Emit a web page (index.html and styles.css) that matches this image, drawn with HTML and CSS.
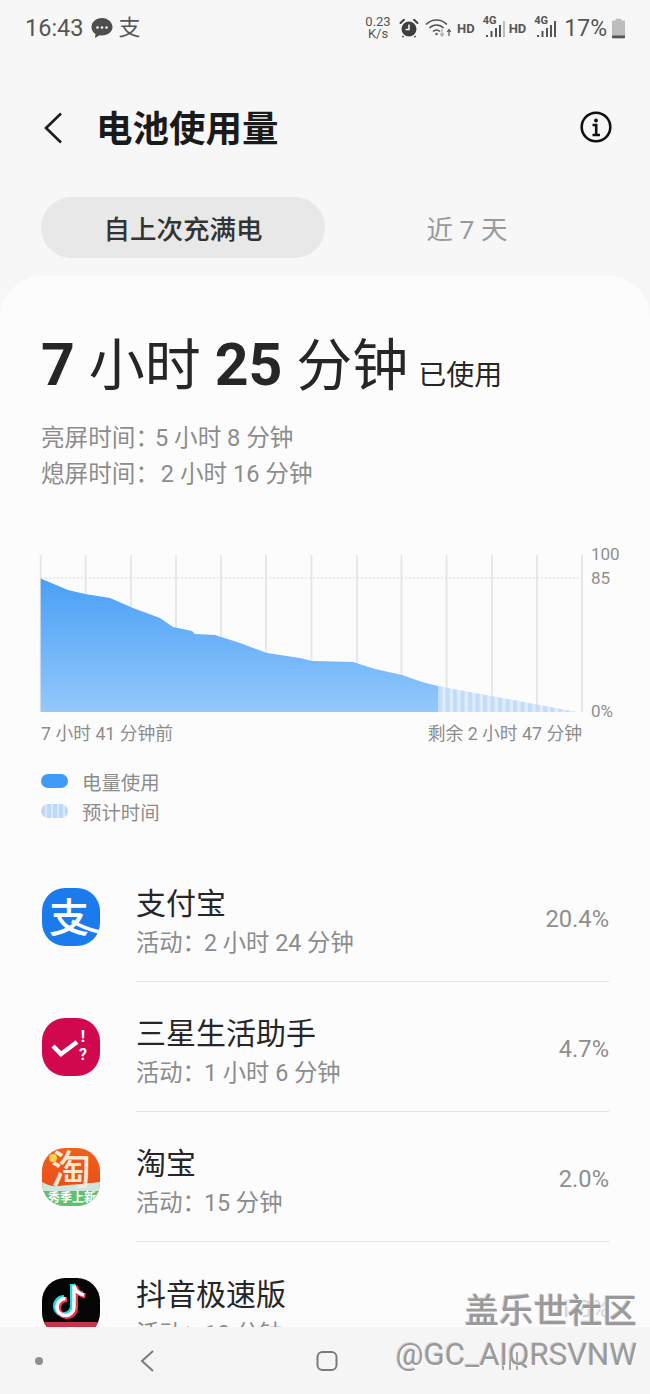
FILE: index.html
```html
<!DOCTYPE html>
<html lang="zh-CN">
<head>
    <meta charset="UTF-8">
    <meta name="viewport" content="width=device-width, initial-scale=1.0">
    <title>电池使用量</title>
    <link rel="stylesheet" href="styles.css">
</head>
<body>
    <div class="phone">
        <div class="status-bar">
            <div class="status-left">
                <span class="clock">16:43</span>
                <svg class="status-icon" width="24" height="24" viewBox="0 0 24 24">
                    <path d="M12 2C6 2 1.500 6 1.500 11c0 3 1.500 5.500 4 7l-.5 4 4.500-2.700c.8.200 1.700.200 2.500.200 6 0 10.500-4 10.500-8.500S18 2 12 2z" fill="#4d4d4d"/>
                    <circle cx="7.500" cy="11.500" r="1.300" fill="#f7f7f7"/>
                    <circle cx="12" cy="11.500" r="1.300" fill="#f7f7f7"/>
                    <circle cx="16.500" cy="11.500" r="1.300" fill="#f7f7f7"/>
                </svg>
                <span class="status-zhi">支</span>
            </div>
            <div class="status-right">
                <span class="speed">0.23<br>K/s</span>
                <svg class="alarm" width="20" height="20" viewBox="0 0 20 20">
                    <circle cx="10" cy="11" r="7.500" fill="#3f3f3f"/>
                    <path d="M1.500 5 5 1.800M18.500 5 15 1.800" stroke="#3f3f3f" stroke-width="2" stroke-linecap="round"/>
                    <path d="M10 6.500V11.500H6.500" stroke="#f7f7f7" stroke-width="1.600" fill="none"/>
                    <path d="M4.500 18 3.500 19.200M15.500 18 16.500 19.200" stroke="#3f3f3f" stroke-width="1.600"/>
                </svg>
                <svg class="wifi" width="27" height="22" viewBox="0 0 27 22">
                    <path d="M1 7.500C7 1.500 16 1.500 22 7.500M4.500 11C8.500 7 14.500 7 18.500 11M8 14.500c2-2 5-2 7 0" fill="none" stroke="#555" stroke-width="1.700"/>
                    <circle cx="11.500" cy="17" r="1.200" fill="#555"/>
                    <path d="M17 12v6M15 16.500l2 2.500 2-2.500" stroke="#aaa" stroke-width="1.200" fill="none"/>
                    <path d="M24 19v-6M22.200 15l1.800-2.500 1.800 2.500" stroke="#555" stroke-width="1.200" fill="none"/>
                </svg>
                <span class="hd">HD</span>
                <span class="signal">
                    <span class="net">4G</span>
                    <svg width="22" height="22" viewBox="0 0 22 22">
                        <path d="M4 20v-2M8.500 20v-6M13 20v-9M17 20v-12" stroke="#555" stroke-width="2"/>
                        <path d="M21 20V4" stroke="#bbb" stroke-width="2"/>
                    </svg>
                </span>
                <span class="hd">HD</span>
                <span class="signal signal-last">
                    <span class="net">4G</span>
                    <svg width="22" height="22" viewBox="0 0 22 22">
                        <path d="M4 20v-2M8.500 20v-6M13 20v-9M17 20v-12M21 20V4" stroke="#555" stroke-width="2"/>
                    </svg>
                </span>
                <span class="battery-text">17%</span>
                <svg width="13" height="21" viewBox="0 0 14 21">
                    <path d="M4 0h6v2h3a1 1 0 0 1 1 1v17a1 1 0 0 1-1 1H1a1 1 0 0 1-1-1V3a1 1 0 0 1 1-1h3z" fill="#bdbdbd"/>
                    <path d="M0 18h14v2a1 1 0 0 1-1 1H1a1 1 0 0 1-1-1z" fill="#555"/>
                </svg>
            </div>
        </div>

        <div class="toolbar">
            <svg class="back" width="20" height="32" viewBox="0 0 20 32">
                <path d="M18 1.500 3 16l15 14.500" fill="none" stroke="#1c1c1c" stroke-width="2.600"/>
            </svg>
            <h1 class="page-title">电池使用量</h1>
            <svg class="info" width="32" height="32" viewBox="0 0 32 32">
                <circle cx="16" cy="16" r="14.300" fill="none" stroke="#111" stroke-width="2.600"/>
                <circle cx="16" cy="9.500" r="1.900" fill="#111"/>
                <path d="M12.500 14H16.200V23.500M12.500 24H20" fill="none" stroke="#111" stroke-width="2.600"/>
            </svg>
        </div>

        <div class="tabs">
            <div class="tab tab-active">自上次充满电</div>
            <div class="tab">近 7 天</div>
        </div>

        <div class="card">
            <div class="summary">
                <div class="usage"><b>7</b> 小时 <b>25</b> 分钟 <span class="usage-label">已使用</span></div>
                <div class="usage-line">亮屏时间<span class="colon">：</span>5 小时 8 分钟</div>
                <div class="usage-line">熄屏时间<span class="colon">：</span> 2 小时 16 分钟</div>
            </div>

            <svg class="chart" width="650" height="180" viewBox="0 540 650 180">
                <defs>
                    <linearGradient id="fill" x1="0" y1="0" x2="0" y2="1">
                        <stop offset="0" stop-color="#4a9ff6"/>
                        <stop offset="1" stop-color="#93c8fc"/>
                    </linearGradient>
                    <pattern id="stripes" x="438" y="0" width="7.500" height="10" patternUnits="userSpaceOnUse">
                        <rect x="0" y="0" width="4.500" height="10" fill="#c3dcf9"/>
                        <rect x="4.500" y="0" width="3" height="10" fill="#dfecfb"/>
                    </pattern>
                </defs>
                <g class="grid">
                    <path d="M40.700 554V711M85.700 554V711M131 554V711M176 554V711M221 554V711M266 554V711M311.500 554V711M357 554V711M401.500 554V711M446.500 554V711M492 554V711M537 554V711M582 554V711"/>
                </g>
                <path class="limit" d="M41 577H582"/>
                <path d="M40.700 577.500 68 589 85 593 110 597 133 607 160 617 173 626 192 630 195 633 215 634 240 642 267 652 300 657 312 660 325 660.300 353 661 375 668 402 674 422 681 438 685V711H40.700Z" fill="url(#fill)"/>
                <path d="M438 685 577 711H438Z" fill="url(#stripes)"/>
                <text class="axis" x="591" y="559">100</text>
                <text class="axis" x="591" y="583">85</text>
                <text class="axis" x="591" y="716">0%</text>
            </svg>

            <div class="chart-labels">
                <span>7 小时 41 分钟前</span>
                <span>剩余 2 小时 47 分钟</span>
            </div>

            <div class="legend">
                <div class="legend-item"><span class="swatch swatch-used"></span>电量使用</div>
                <div class="legend-item"><span class="swatch swatch-estimate"></span>预计时间</div>
            </div>

            <div class="app-list">
                <div class="app-row">
                    <svg class="app-icon" width="58" height="58" viewBox="0 0 58 58">
                        <rect width="58" height="58" rx="23" fill="#1b7bed"/>
                        <text class="icon-zhi" x="27" y="44">支</text>
                        <path d="M30 33c8 5 18 9 28 11" fill="none" stroke="#fff" stroke-width="3.500"/>
                    </svg>
                    <div class="app-body">
                        <div class="app-text">
                            <div class="app-name">支付宝</div>
                            <div class="app-active">活动<span class="colon-small">：</span>2 小时 24 分钟</div>
                        </div>
                        <div class="app-percent">20.4%</div>
                    </div>
                </div>
                <div class="app-row">
                    <svg class="app-icon" width="58" height="58" viewBox="0 0 58 58">
                        <rect width="58" height="58" rx="23" fill="#d1084f"/>
                        <path d="M11 28 19 36 35 24" fill="none" stroke="#fff" stroke-width="4.500"/>
                        <text class="icon-mark" x="41" y="24">!</text>
                        <text class="icon-mark" x="41" y="42">?</text>
                    </svg>
                    <div class="app-body">
                        <div class="app-text">
                            <div class="app-name">三星生活助手</div>
                            <div class="app-active">活动<span class="colon-small">：</span>1 小时 6 分钟</div>
                        </div>
                        <div class="app-percent">4.7%</div>
                    </div>
                </div>
                <div class="app-row">
                    <svg class="app-icon" width="58" height="58" viewBox="0 0 58 58">
                        <defs>
                            <clipPath id="taobao-clip"><rect width="58" height="58" rx="23"/></clipPath>
                            <linearGradient id="taobao-bg" x1="0" y1="0" x2="0" y2="1">
                                <stop offset="0" stop-color="#f0601d"/>
                                <stop offset="1" stop-color="#e8461a"/>
                            </linearGradient>
                        </defs>
                        <g clip-path="url(#taobao-clip)">
                            <rect width="58" height="58" fill="url(#taobao-bg)"/>
                            <path d="M0 34c8 4 12 5 18 4s24-2 40-4v24H0z" fill="#cfe6df"/>
                            <path d="M0 43h58v15H0z" fill="#5fc06d"/>
                            <circle cx="11" cy="10" r="4" fill="#f7d24a"/>
                            <text class="icon-tao" x="29" y="36">淘</text>
                            <text class="icon-tao-sub" x="30" y="54">秀季上新</text>
                        </g>
                    </svg>
                    <div class="app-body">
                        <div class="app-text">
                            <div class="app-name">淘宝</div>
                            <div class="app-active">活动<span class="colon-small">：</span>15 分钟</div>
                        </div>
                        <div class="app-percent">2.0%</div>
                    </div>
                </div>
                <div class="app-row">
                    <svg class="app-icon" width="58" height="58" viewBox="0 0 58 58">
                        <defs>
                            <clipPath id="tiktok-clip"><rect width="58" height="58" rx="23"/></clipPath>
                        </defs>
                        <g clip-path="url(#tiktok-clip)">
                            <rect width="58" height="58" fill="#050505"/>
                            <rect y="44" width="58" height="14" fill="#c8324a"/>
                            <path d="M32 7V29a8.500 8.500 0 1 1-8.500-8.500M32 7c1 6 5 9 10 10" fill="none" stroke="#25d8de" stroke-width="5" transform="translate(-1.500 -1)"/>
                            <path d="M32 7V29a8.500 8.500 0 1 1-8.500-8.500M32 7c1 6 5 9 10 10" fill="none" stroke="#f0325a" stroke-width="5" transform="translate(1.500 1)"/>
                            <path d="M32 7V29a8.500 8.500 0 1 1-8.500-8.500M32 7c1 6 5 9 10 10" fill="none" stroke="#fff" stroke-width="3.500"/>
                        </g>
                    </svg>
                    <div class="app-body">
                        <div class="app-text">
                            <div class="app-name">抖音极速版</div>
                            <div class="app-active">活动<span class="colon-small">：</span>10 分钟</div>
                        </div>
                        <div class="app-percent app-percent-faint">1.8%</div>
                    </div>
                </div>
            </div>
        </div>

        <div class="nav-bar">
            <span class="nav-dot"></span>
            <svg class="nav-back" width="16" height="24" viewBox="0 0 16 24">
                <path d="M14 2 3 12l11 10" fill="none" stroke="#7a7a7a" stroke-width="2"/>
            </svg>
            <svg class="nav-home" width="24" height="24" viewBox="0 0 24 24">
                <rect x="2.500" y="3" width="19" height="18" rx="5" fill="none" stroke="#7a7a7a" stroke-width="2"/>
            </svg>
            <svg class="nav-recent" width="24" height="24" viewBox="0 0 24 24">
                <path d="M5 3V21M12 3V21M19 3V21" stroke="#a8a8a8" stroke-width="2"/>
            </svg>
        </div>

        <div class="watermark">
            <div class="watermark-brand">盖乐世社区</div>
            <div class="watermark-user">@GC_AIQRSVNW</div>
        </div>
    </div>
</body>
</html>
```

FILE: styles.css
```css
* {
    box-sizing: border-box;
}

body {
    margin: 0;
    padding: 0;
    font-family: Roboto, "Noto Sans CJK SC", sans-serif;
    background-color: #f7f7f7;
}

.phone {
    position: relative;
    display: flex;
    flex-direction: column;
    width: 650px;
    height: 1394px;
    overflow: hidden;
    background-color: #f7f7f7;
}

/* status bar */
.status-bar {
    flex: none;
    display: flex;
    justify-content: space-between;
    align-items: center;
    height: 56px;
    padding: 0 25px 0 25px;
    color: #555;
}

.status-left, .status-right {
    display: flex;
    align-items: center;
}

.clock {
    font-size: 23.500px;
}

.status-icon {
    margin-left: 6px;
}

.status-zhi {
    margin-left: 5px;
    font-size: 22px;
    line-height: 24px;
    color: #555;
}

.speed {
    width: 30px;
    margin-right: 6px;
    font-size: 13px;
    line-height: 12px;
    text-align: center;
}

.alarm {
    margin-right: 6px;
}

.wifi {
    margin-right: 5px;
}

.hd {
    margin-right: 8px;
    font-size: 13px;
    font-weight: 700;
}

.signal {
    position: relative;
    width: 22px;
    height: 22px;
    margin-right: 4px;
}

.signal-last {
    margin-right: 8px;
}

.net {
    position: absolute;
    left: 0;
    top: -3px;
    font-size: 11px;
    font-weight: 700;
}

.battery-text {
    margin-right: 5px;
    font-size: 23px;
}

/* toolbar */
.toolbar {
    flex: none;
    display: flex;
    align-items: center;
    height: 72px;
    margin-top: 36px;
    padding: 0 38px 0 43px;
}

.page-title {
    flex: 1;
    margin: 0 0 0 33px;
    padding-top: 3px;
    font-size: 36.500px;
    line-height: 69px;
    font-weight: 700;
    color: #1a1a1a;
}

.info {
    margin-bottom: 3px;
}

/* tabs */
.tabs {
    flex: none;
    display: flex;
    height: 61px;
    margin-top: 33px;
    padding: 0 41px;
}

.tab {
    display: flex;
    align-items: center;
    justify-content: center;
    flex: 1;
    border-radius: 31px;
    font-size: 26.500px;
    color: #9a9a9a;
}

.tab-active {
    flex: none;
    width: 284px;
    background-color: #e8e8e8;
    color: #333;
    font-weight: 500;
}

/* main card */
.card {
    flex: 1;
    min-height: 0;
    margin-top: 18px;
    overflow: hidden;
    background-color: #fcfcfc;
    border-radius: 42px 42px 0 0;
}

.summary {
    padding: 54px 41px 0;
}

.usage {
    margin-bottom: 9px;
    font-size: 56px;
    line-height: 70px;
    color: #262626;
    white-space: nowrap;
}

.usage b {
    font-size: 59px;
}

.usage-label {
    margin-left: -4px;
    font-size: 28px;
}

.usage-line {
    font-size: 23.600px;
    line-height: 36px;
    color: #8c8c8c;
}

.colon {
    margin-right: -4px;
}

/* chart */
.chart {
    display: block;
    margin-top: 49px;
}

.grid path {
    fill: none;
    stroke: #e6e6e6;
    stroke-width: 1.800;
}

.limit {
    fill: none;
    stroke: #d8d8d8;
    stroke-width: 1;
    stroke-dasharray: 2 2;
}

.axis {
    font-size: 17px;
    fill: #8f8f8f;
}

.chart-labels {
    display: flex;
    justify-content: space-between;
    width: 582px;
    margin-top: 1px;
    padding-left: 41px;
    font-size: 17.800px;
    line-height: 24px;
    color: #8c8c8c;
}

.legend {
    margin-top: 20px;
    padding-left: 41px;
}

.legend-item {
    display: flex;
    align-items: center;
    height: 30px;
    font-size: 19.400px;
    color: #8c8c8c;
}

.swatch {
    width: 27px;
    height: 14px;
    margin-right: 14px;
    border-radius: 7px;
}

.swatch-used {
    background-color: #3f9bf7;
}

.swatch-estimate {
    background: repeating-linear-gradient(90deg, #bcd9f9 0, #bcd9f9 4px, #dcebfb 4px, #dcebfb 6px);
}

/* app list */
.app-list {
    margin-top: 26px;
    padding: 0 41px 0 42px;
}

.app-row {
    display: flex;
    align-items: center;
    height: 130px;
}

.app-icon {
    flex: none;
    margin-right: 36px;
}

.app-body {
    flex: 1;
    display: flex;
    align-items: center;
    justify-content: space-between;
    align-self: stretch;
    border-bottom: 1px solid #e4e4e4;
}

.app-row:last-child .app-body {
    border-bottom: none;
}

.app-text {
    padding-top: 12px;
}

.app-name {
    font-size: 30px;
    line-height: 40px;
    color: #262626;
}

.app-active {
    margin-top: 1px;
    font-size: 23.300px;
    line-height: 36px;
    color: #8c8c8c;
}

.colon-small {
    margin-right: -2px;
}

.app-percent {
    padding-top: 4px;
    font-size: 23.700px;
    color: #8f8f8f;
}

.app-percent-faint {
    color: #d4d4d4;
}

/* text inside app icons */
.icon-zhi {
    font-size: 40px;
    font-weight: 500;
    fill: #fff;
    text-anchor: middle;
}

.icon-mark {
    font-size: 16px;
    font-weight: 700;
    fill: #fff;
    text-anchor: middle;
}

.icon-tao {
    font-size: 40px;
    font-weight: 500;
    fill: #fde6d2;
    text-anchor: middle;
}

.icon-tao-sub {
    font-size: 12px;
    font-weight: 700;
    fill: #fff;
    text-anchor: middle;
}

/* bottom navigation */
.nav-bar {
    flex: none;
    display: flex;
    align-items: center;
    height: 67px;
    padding-left: 35px;
    background-color: #f5f5f5;
}

.nav-dot {
    width: 8px;
    height: 8px;
    border-radius: 50%;
    background-color: #8f8f8f;
}

.nav-back {
    margin-left: 96px;
}

.nav-home {
    margin-left: 160px;
}

.nav-recent {
    margin-left: 159px;
}

/* watermark over the bottom right corner */
.watermark {
    position: absolute;
    right: 13px;
    bottom: 17px;
    text-align: right;
    color: #9a9a9a;
    text-shadow: 1px 1px 0 #fff, -1px -1px 0 #d8d8d8;
}

.watermark-brand {
    font-size: 34.500px;
    line-height: 44px;
    font-weight: 500;
}

.watermark-user {
    font-size: 31.200px;
    line-height: 44px;
}
```
